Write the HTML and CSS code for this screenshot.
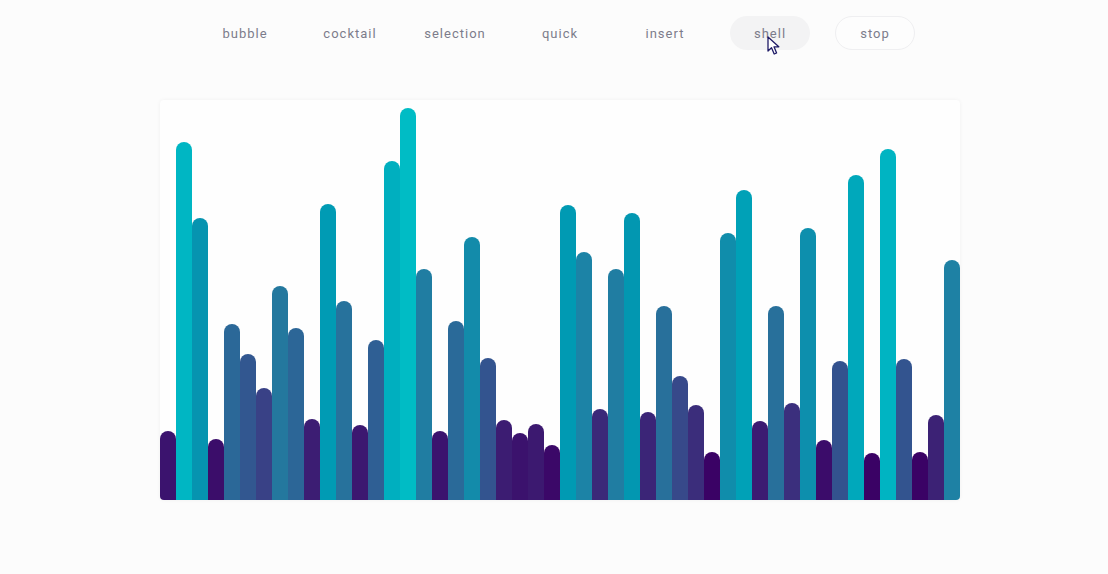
FILE: index.html
```html
<!doctype html>
<html>
	<head>
		<link rel="stylesheet" href="styles.css">
	</head>
	<body>
		<div class="pagina">
			<nav class="menu">
				<button class="boton">bubble</button>
				<button class="boton">cocktail</button>
				<button class="boton">selection</button>
				<button class="boton">quick</button>
				<button class="boton">insert</button>
				<button class="boton activo">shell
					<svg class="cursor" width="14" height="20" viewBox="0 0 14 20">
						<path d="M1 1 L1 15 L4.5 11.8 L7.2 18 L9.6 17 L7 10.8 L11.8 10.8 Z" fill="#fff" stroke="#1e1a66" stroke-width="1.3" stroke-linejoin="round"/>
					</svg>
				</button>
				<button class="boton parar">stop</button>
			</nav>
			<main class="grafico" id="grafico"></main>
		</div>
		<script>
			const alturas = [69,358,282,61,176,146,112,214,172,81,296,199,75,160,339,392,231,69,179,263,142,80,67,76,55,295,248,91,231,287,88,194,124,95,48,267,310,79,194,97,272,60,139,325,47,351,141,48,85,240]
			const paradas = [
				[45,58,0,100],
				[80,60,28,114],
				[115,57,68,136],
				[175,43,104,152],
				[215,36,120,158],
				[250,28,132,166],
				[290,0,152,178],
				[350,0,180,194],
				[400,0,190,198]
			]
			function color(h){
				for(let i=1;i<paradas.length;i++){
					let a = paradas[i-1], b = paradas[i]
					if(h<=b[0]){
						let t = Math.max(0,(h-a[0])/(b[0]-a[0]))
						let c = [1,2,3].map(function(k){ return Math.round(a[k]+(b[k]-a[k])*t) })
						return "rgb("+c.join(",")+")"
					}
				}
				return "rgb(0,190,198)"
			}
			const contenedor = document.getElementById('grafico')
			alturas.forEach(function(h){
				let barra = document.createElement('div')
				barra.className = 'barra'
				barra.style.height = h+'px'
				barra.style.background = color(h)
				contenedor.appendChild(barra)
			})
		</script>
	</body>
</html>
```

FILE: styles.css
```css
*{padding:0px;margin:0px;box-sizing:border-box;}
body,html{
	height:100%;
}
body{
	background:#fcfcfc;
	font-family:Roboto,"Liberation Sans",sans-serif;
}
.pagina{
	width:800px;
	margin-left:160px;
	padding-top:16px;
}
.menu{
	display:flex;
	justify-content:center;
	gap:25px;
}
.boton{
	position:relative;
	width:80px;
	height:34px;
	border:1px solid transparent;
	border-radius:17px;
	background:transparent;
	font-family:Roboto,"Liberation Sans",sans-serif;
	font-size:13px;
	letter-spacing:1px;
	color:#7c7c8b;
	cursor:pointer;
}
.activo{
	background:#f3f3f4;
}
.parar{
	border-color:#efeff1;
	background:#fdfdfd;
}
.cursor{
	position:absolute;
	left:36px;
	top:19px;
}
.grafico{
	margin-top:50px;
	height:400px;
	display:flex;
	align-items:flex-end;
	background:#fefefe;
	border-radius:4px;
	overflow:hidden;
	box-shadow:0px 0px 4px rgba(0,0,0,0.05);
}
.barra{
	width:16px;
	flex:none;
	border-radius:8px 8px 0 0;
}
```
